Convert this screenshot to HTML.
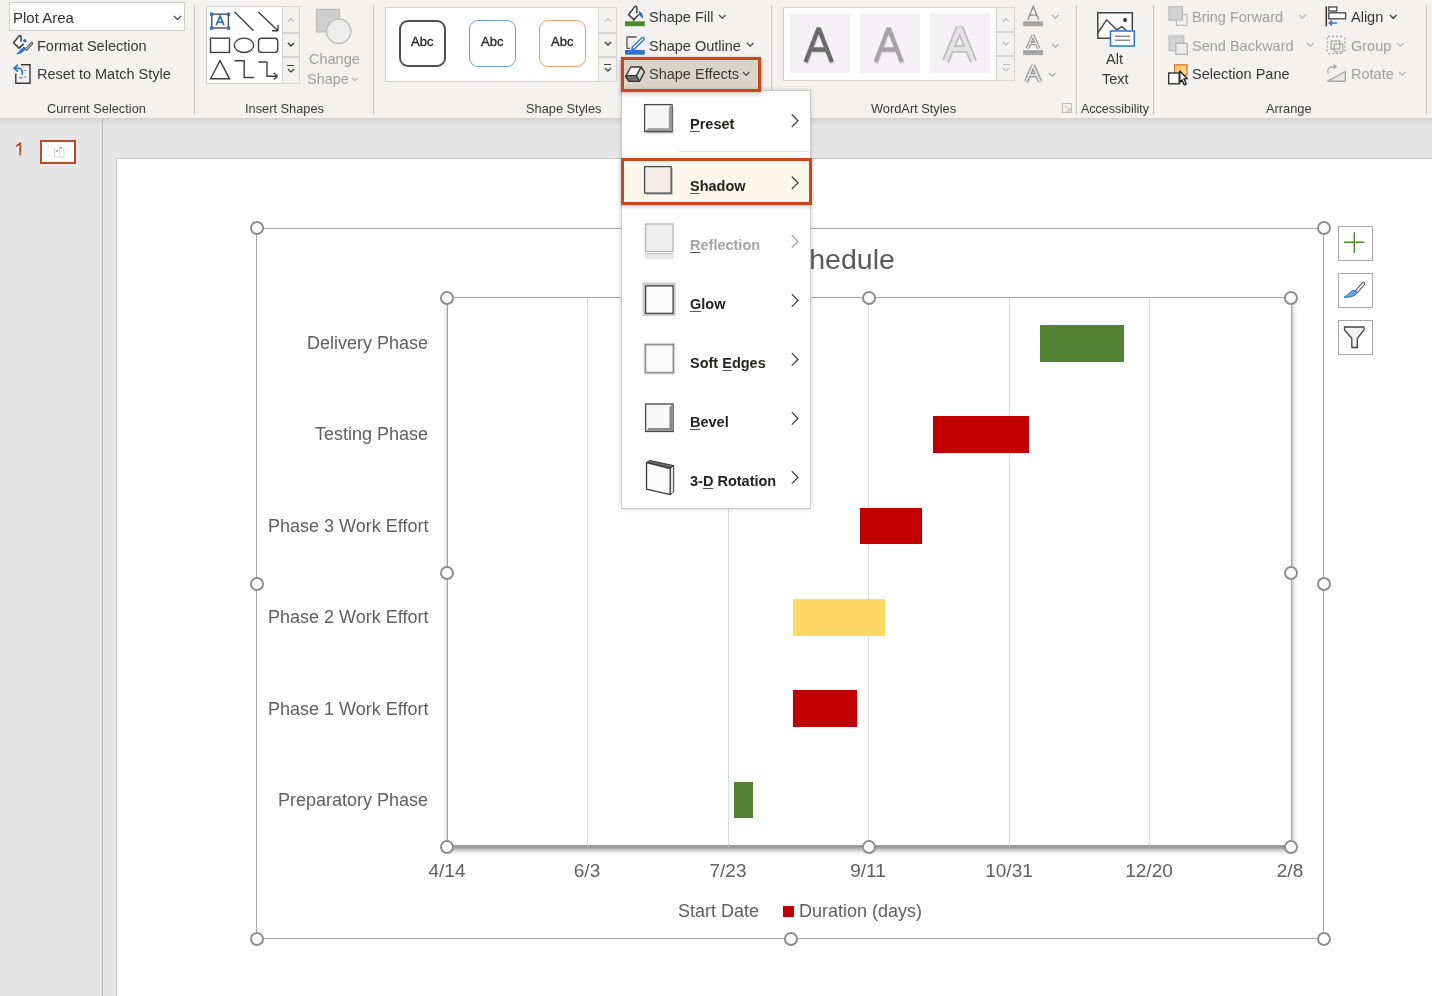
<!DOCTYPE html>
<html><head><meta charset="utf-8">
<style>
*{margin:0;padding:0;box-sizing:border-box}
html,body{width:1432px;height:996px;overflow:hidden}
body{position:relative;background:#e6e6e6;font-family:"Liberation Sans",sans-serif;color:#262626}
.a{position:absolute}
.t,.lbl,.mt{will-change:transform}
.t{position:absolute;white-space:nowrap;font-size:14.6px;line-height:1;color:#323130}
.dis{color:#a19f9d}
.sep{position:absolute;top:5px;width:1px;height:110px;background:#c8c6c4}
.glab{position:absolute;top:101px;font-size:13px;line-height:1;color:#3b3a39;white-space:nowrap}
#ribbon{position:absolute;left:0;top:0;width:1432px;height:118px;background:#f3f2f1}
#rshadow{position:absolute;left:0;top:118px;width:1432px;height:8px;background:linear-gradient(#d2d2d2,#e6e6e6)}
.chev{position:absolute;width:6px;height:6px;border-right:1.3px solid #444;border-bottom:1.3px solid #444;transform:rotate(45deg)}
.sbtn{position:absolute;background:#f3f2f1;border:1px solid #d6d4d2}
/* slide */
#slide{position:absolute;left:116px;top:158px;width:1330px;height:850px;background:#fff;border:1px solid #c9c9c9}
.lbl{position:absolute;white-space:nowrap;font-size:18px;line-height:1;color:#606060}
.handle{position:absolute;width:14px;height:14px;border-radius:50%;border:2px solid #8f8f8f;background:#fff}
.grid{position:absolute;top:298px;width:1px;height:549px;background:#d9d9d9}
.bar{position:absolute}
.ax{font-size:19px;transform:translateX(-50%)}
/* menu */
#menu{position:absolute;left:621px;top:89.5px;width:190px;height:419px;background:#fff;border:1px solid #cdcbc9;box-shadow:0 0 5px rgba(0,0,0,.16)}
.mi{position:absolute;left:0;width:187px;height:47px}
.mt{position:absolute;left:689.5px;font-size:14.5px;font-weight:bold;color:#252423;white-space:nowrap;line-height:1}
.mt u{text-decoration-thickness:1px;text-underline-offset:2px;text-decoration-color:#555}
.mchev{position:absolute;left:167px;width:8px;height:8px;border-right:1.4px solid #444;border-top:1.4px solid #444;transform:rotate(45deg)}
</style></head>
<body>
<div id="ribbon">
<div class="a" style="left:9px;top:2px;width:176px;height:28.5px;background:#fff;border:1px solid #cfcdcb"></div>
<div class="t" style="left:12.5px;top:9.60px;font-size:15px;color:#333;">Plot Area</div>
<svg class="a" style="left:173px;top:15px" width="9" height="6.5"><path d="M1 1 L4.5 4.5 L8 1" fill="none" stroke="#444" stroke-width="1.2"/></svg>
<svg class="a" style="left:10px;top:32px" width="26" height="56" viewBox="10 32 26 56">
 <path d="M21 41.7 L21 36.8 Q20.4 34.6 18.9 36.2 L13.5 42.7 L19.1 48.1 L23.6 43.7" fill="#fff" stroke="#3a3a3a" stroke-width="1.5" stroke-linejoin="round"/>
 <circle cx="24.8" cy="40.8" r="1.7" fill="#2b6fc0"/>
 <path d="M25.5 48.6 L31.6 42.4 Q33 42.5 32.5 44 L26.6 50.3 Z" fill="#e8e8e8" stroke="#555" stroke-width="1.1"/>
 <path d="M17 53.8 Q20.5 53.5 23 51.5 L25.8 48.8 L24 47.2 L21.5 49 Q19.5 51 17 53.8 Z" fill="#2b74c7" stroke="#2b74c7" stroke-width="1"/>
</svg>
<div class="t" style="left:37.4px;top:39.13px;font-size:14.5px;color:#383838;">Format Selection</div>
<svg class="a" style="left:10px;top:62px" width="24" height="25" viewBox="10 62 24 25">
 <path d="M21 64.8 L30 64.8 L30 83.3 L15.8 83.3 L15.8 73.5" fill="none" stroke="#3a3a3a" stroke-width="1.4"/>
 <path d="M14 68.3 L17.5 65.2 M14 68.3 L17.5 71.2 M14.3 68.3 L19 68.3 Q22.3 68.6 22.3 72.8 L22.3 74.5" fill="none" stroke="#2b74c7" stroke-width="1.6" stroke-linecap="round" stroke-linejoin="round"/>
 <path d="M24.5 70.5 L26.5 70.5 M24.5 77 L26.5 77 M19 77.8 L22.5 77.8" stroke="#666" stroke-width="1"/>
</svg>
<div class="t" style="left:37.4px;top:67.33px;font-size:14.5px;color:#383838;">Reset to Match Style</div>
<div class="sep" style="left:194px"></div>
<div class="t" style="left:47px;top:102.76px;font-size:12.8px;color:#3b3a39;">Current Selection</div>
<div class="a" style="left:206px;top:6px;width:94px;height:78px;border:1px solid #d2d0ce;background:#fff"></div>
<div class="sbtn" style="left:281.5px;top:6px;width:18.5px;height:26.5px"></div>
<div class="sbtn" style="left:281.5px;top:32.5px;width:18.5px;height:24.5px"></div>
<div class="sbtn" style="left:281.5px;top:57px;width:18.5px;height:27px"></div>
<svg class="a" style="left:200px;top:5px" width="102" height="82" viewBox="200 5 102 82" fill="none" stroke="#404040" stroke-width="1.4">
 <rect x="211.8" y="14.2" width="16.6" height="13.8" stroke="#505050"/>
 <g fill="#2b74c7" stroke="none"><rect x="210" y="12.5" width="3.3" height="3.3"/><rect x="226.9" y="12.5" width="3.3" height="3.3"/><rect x="210" y="26.5" width="3.3" height="3.3"/><rect x="226.9" y="26.5" width="3.3" height="3.3"/></g>
 <path d="M216.3 25.2 L220.1 16 L223.9 25.2 M217.6 22.2 L222.6 22.2" stroke="#2b74c7" stroke-width="1.8"/>
 <path d="M234.7 11.9 L253.5 30.7"/>
 <path d="M258.4 11.9 L278 30.7 M278 30.7 L278 24.8 M278 30.7 L272 30.7"/>
 <rect x="210.5" y="38.2" width="19" height="14.2"/>
 <ellipse cx="244" cy="45.3" rx="9.7" ry="7.2"/>
 <rect x="258.5" y="38.2" width="19.2" height="14.2" rx="3.2"/>
 <path d="M210.6 78.8 L220 60.6 L229.6 78.8 Z"/>
 <path d="M234.5 60.8 L244.2 60.8 L244.2 77.5 L254 77.5"/>
 <path d="M258.4 62 L267 62 L267 76.3 L277.5 76.3 M277.5 76.3 L273.8 73 M277.5 76.3 L273.8 79.5"/>
</svg>
<svg class="a" style="left:286.5px;top:17px" width="8" height="6.0"><path d="M1 4.5 L4.0 1.5 L7 4.5" fill="none" stroke="#bdbdbd" stroke-width="1.1"/></svg>
<svg class="a" style="left:286.5px;top:42px" width="8" height="6.0"><path d="M1 1 L4.0 4.0 L7 1" fill="none" stroke="#333" stroke-width="1.3"/></svg>
<div class="a" style="left:287px;top:64.5px;width:7px;height:1.3px;background:#444"></div>
<svg class="a" style="left:286.5px;top:67.5px" width="8" height="6.0"><path d="M1 1 L4.0 4.0 L7 1" fill="none" stroke="#444" stroke-width="1.3"/></svg>
<svg class="a" style="left:314px;top:7px" width="40" height="40" viewBox="314 7 40 40">
 <rect x="316.5" y="9.5" width="23" height="22.5" fill="#cfcfcf" stroke="#bdbdbd" stroke-width="1.3"/>
 <circle cx="338.7" cy="31.3" r="12.2" fill="#ececec" stroke="#bdbdbd" stroke-width="1.4"/>
</svg>
<div class="t" style="left:309.3px;top:51.73px;font-size:14.5px;color:#a19f9d;">Change</div>
<div class="t" style="left:306.5px;top:71.73px;font-size:14.5px;color:#a19f9d;">Shape</div>
<svg class="a" style="left:350.5px;top:76.5px" width="7.5" height="5.75"><path d="M1 1 L3.75 3.75 L6.5 1" fill="none" stroke="#b0b0b0" stroke-width="1.1"/></svg>
<div class="sep" style="left:373px"></div>
<div class="t" style="left:245px;top:102.76px;font-size:12.8px;color:#3b3a39;">Insert Shapes</div>
<div class="a" style="left:385px;top:6.5px;width:232px;height:75px;border:1px solid #d2d0ce;background:#fff"></div>
<div class="sbtn" style="left:598px;top:6.5px;width:19px;height:26px"></div>
<div class="sbtn" style="left:598px;top:32.5px;width:19px;height:24px"></div>
<div class="sbtn" style="left:598px;top:56.5px;width:19px;height:25px"></div>
<div class="a" style="left:398.5px;top:20px;width:47px;height:47px;border:2px solid #505050;border-radius:9px"></div>
<div class="a" style="left:468.5px;top:20px;width:47px;height:47px;border:1.7px solid #6fa0db;border-radius:9px"></div>
<div class="a" style="left:538.5px;top:20px;width:47px;height:47px;border:1.7px solid #efa070;border-radius:9px"></div>
<div class="t" style="left:411px;top:35.00px;font-size:13px;color:#2a2a2a;-webkit-text-stroke:.35px #2a2a2a">Abc</div>
<div class="t" style="left:481px;top:35.00px;font-size:13px;color:#2a2a2a;-webkit-text-stroke:.35px #2a2a2a">Abc</div>
<div class="t" style="left:551px;top:35.00px;font-size:13px;color:#2a2a2a;-webkit-text-stroke:.35px #2a2a2a">Abc</div>
<svg class="a" style="left:603.5px;top:17px" width="8" height="6.0"><path d="M1 4.5 L4.0 1.5 L7 4.5" fill="none" stroke="#bdbdbd" stroke-width="1.1"/></svg>
<svg class="a" style="left:603.5px;top:41px" width="8" height="6.0"><path d="M1 1 L4.0 4.0 L7 1" fill="none" stroke="#333" stroke-width="1.3"/></svg>
<div class="a" style="left:604px;top:63.5px;width:7px;height:1.3px;background:#444"></div>
<svg class="a" style="left:603.5px;top:66.5px" width="8" height="6.0"><path d="M1 1 L4.0 4.0 L7 1" fill="none" stroke="#444" stroke-width="1.3"/></svg>
<div class="a" style="left:621px;top:56.8px;width:140px;height:35px;background:#d9d4c8;box-shadow:0 2px 4px rgba(0,0,0,.2)"></div>
<svg class="a" style="left:622px;top:4px" width="26" height="84" viewBox="622 4 26 84">
 <path d="M636.9 13.2 L636.9 7.6 Q636.2 5.4 634.6 6.9 L628.6 14.7 L633.8 19.6 L639.6 13.8" fill="#fff" stroke="#3f3f3f" stroke-width="1.5" stroke-linejoin="round"/>
 <path d="M633.8 19.6 L633.8 21.5" stroke="#555" stroke-width="1.2"/>
 <path d="M639.3 11.5 Q642.6 12.8 642.6 18 Q641 17 639.5 13.5 Z" fill="#2f6db8" stroke="#2f6db8" stroke-width="1"/>
 <rect x="625" y="21.3" width="19.8" height="4.9" fill="#4f8a2e"/>
 <path d="M636.5 37 L627 37 L627 48.3 L630 48.3" fill="none" stroke="#555" stroke-width="1.3"/>
 <path d="M643.5 37.6 Q644.8 38.8 643.6 40 L634 49.2 L631.8 49.6 L632.2 47.3 L641.6 38 Q642.5 37 643.5 37.6 Z" fill="#fff" stroke="#2b74c7" stroke-width="1.4" stroke-linejoin="round"/>
 <rect x="625" y="50" width="19.8" height="4.7" fill="#2b74c7"/>
 <path d="M626.5 75.6 L636.4 75.6 L639.7 81.3 L628.9 81.4 L625.6 76.6 Z" fill="#6e6e6e"/>
 <path d="M636.4 75.6 L641.1 67 L644.4 71.9 L639.7 81.3 Z" fill="#d6d6d6"/>
 <path d="M630.8 67 L641.1 67 L636.4 75.6 L626.5 75.6 Z" fill="#fbfbfb"/>
 <path d="M630.8 67 L641.1 67 L644.4 71.9 L639.7 81.3 L628.9 81.4 L625.6 76.6 Z M626.5 75.6 L636.4 75.6 L641.1 67 M636.4 75.6 L639.7 81.3" fill="none" stroke="#353535" stroke-width="1.4" stroke-linejoin="round"/>
</svg>
<div class="t" style="left:649.4px;top:10.03px;font-size:14.5px;color:#383838;">Shape Fill</div>
<svg class="a" style="left:717.5px;top:13.5px" width="8.5" height="6.25"><path d="M1 1 L4.25 4.25 L7.5 1" fill="none" stroke="#444" stroke-width="1.2"/></svg>
<div class="t" style="left:649.4px;top:38.73px;font-size:14.5px;color:#383838;">Shape Outline</div>
<svg class="a" style="left:746px;top:42px" width="8.5" height="6.25"><path d="M1 1 L4.25 4.25 L7.5 1" fill="none" stroke="#444" stroke-width="1.2"/></svg>
<div class="t" style="left:649.4px;top:67.33px;font-size:14.5px;color:#3b3a39;">Shape Effects</div>
<svg class="a" style="left:741.5px;top:70.5px" width="8.5" height="6.25"><path d="M1 1 L4.25 4.25 L7.5 1" fill="none" stroke="#444" stroke-width="1.2"/></svg>
<div class="sep" style="left:771px"></div>
<div class="t" style="left:526px;top:102.76px;font-size:12.8px;color:#3b3a39;">Shape Styles</div>
<div class="a" style="left:783px;top:6.5px;width:232px;height:74px;border:1px solid #d2d0ce;background:#fff"></div>
<div class="sbtn" style="left:996px;top:6.5px;width:19px;height:25.5px"></div>
<div class="sbtn" style="left:996px;top:32px;width:19px;height:24px"></div>
<div class="sbtn" style="left:996px;top:56px;width:19px;height:24.5px"></div>
<div class="a" style="left:790px;top:13.5px;width:60px;height:59px;background:#f5f2f5"></div>
<div class="a" style="left:860px;top:13.5px;width:60px;height:59px;background:#f5f2f5"></div>
<div class="a" style="left:930px;top:13.5px;width:60px;height:59px;background:#f5f2f5"></div>
<svg class="a" style="left:790px;top:13px" width="200" height="60" viewBox="790 13 200 60">
 <path d="M805.5 63 L818.6 28 L832 63 M810.5 50.2 L827 50.2" fill="none" stroke="#d6d3d6" stroke-width="4.4" stroke-linejoin="bevel" transform="translate(.8 .8)"/>
 <path d="M805.5 62 L818.6 28 L831.8 62 M810.5 49.5 L826.8 49.5" fill="none" stroke="#6b6b6b" stroke-width="4.3" stroke-linejoin="bevel"/>
 <path d="M875.5 63 L888.6 28 L902 63 M880.5 50.2 L897 50.2" fill="none" stroke="#dedade" stroke-width="4.4" stroke-linejoin="bevel" transform="translate(.8 .8)"/>
 <path d="M875.5 62 L888.6 28 L901.8 62 M880.5 49.5 L896.8 49.5" fill="none" stroke="#a4a4a4" stroke-width="4.3" stroke-linejoin="bevel"/>
 <path d="M945.5 61.5 L959.5 27.5 L973.5 61.5 M951 49 L968 49" fill="none" stroke="#bebebe" stroke-width="7.5" stroke-linejoin="bevel"/>
 <path d="M945.5 61.5 L959.5 27.5 L973.5 61.5 M951 49 L968 49" fill="none" stroke="#e4e4e4" stroke-width="4" stroke-linejoin="bevel"/>
</svg>
<svg class="a" style="left:1002px;top:16.5px" width="8" height="6.0"><path d="M1 4.5 L4.0 1.5 L7 4.5" fill="none" stroke="#bdbdbd" stroke-width="1.1"/></svg>
<svg class="a" style="left:1002px;top:41px" width="8" height="6.0"><path d="M1 1 L4.0 4.0 L7 1" fill="none" stroke="#bdbdbd" stroke-width="1.1"/></svg>
<div class="a" style="left:1002.5px;top:63.5px;width:7px;height:1.2px;background:#bdbdbd"></div>
<svg class="a" style="left:1002px;top:66.5px" width="8" height="6.0"><path d="M1 1 L4.0 4.0 L7 1" fill="none" stroke="#bdbdbd" stroke-width="1.1"/></svg>
<svg class="a" style="left:1020px;top:4px" width="26" height="82" viewBox="1020 4 26 82" fill="none">
 <path d="M1027.8 19.8 L1033.3 6.5 L1038.8 19.8 M1029.8 15.2 L1036.8 15.2" stroke="#8c8c8c" stroke-width="1.3"/>
 <rect x="1023.1" y="21.3" width="19.9" height="5" fill="#a6a6a6"/>
 <path d="M1027.3 48.5 L1033 35.5 L1038.7 48.5 M1029.5 43.5 L1036.5 43.5" stroke="#9a9a9a" stroke-width="3.4" stroke-linejoin="bevel"/>
 <path d="M1027.3 48.5 L1033 35.5 L1038.7 48.5 M1029.5 43.5 L1036.5 43.5" stroke="#f3f2f1" stroke-width="1.1" stroke-linejoin="bevel"/>
 <rect x="1023.1" y="50.1" width="19.9" height="5" fill="#a6a6a6"/>
 <path d="M1026 81.5 L1033 65.5 L1040 81.5 M1029 75 L1037 75" stroke="#cfcfcf" stroke-width="4.6" stroke-linejoin="bevel" transform="translate(.6 .8)"/>
 <path d="M1026 81.5 L1033 65.5 L1040 81.5 M1029 75 L1037 75" stroke="#9c9c9c" stroke-width="4.2" stroke-linejoin="bevel"/>
 <path d="M1026 81.5 L1033 65.5 L1040 81.5 M1029 75 L1037 75" stroke="#f0f0f0" stroke-width="1.6" stroke-linejoin="bevel"/>
</svg>
<svg class="a" style="left:1051px;top:14px" width="8.5" height="6.25"><path d="M1 1 L4.25 4.25 L7.5 1" fill="none" stroke="#a6a6a6" stroke-width="1.1"/></svg>
<svg class="a" style="left:1051px;top:43px" width="8.5" height="6.25"><path d="M1 1 L4.25 4.25 L7.5 1" fill="none" stroke="#a6a6a6" stroke-width="1.1"/></svg>
<svg class="a" style="left:1048px;top:71.5px" width="8.5" height="6.25"><path d="M1 1 L4.25 4.25 L7.5 1" fill="none" stroke="#a6a6a6" stroke-width="1.1"/></svg>
<div class="t" style="left:871px;top:102.76px;font-size:12.8px;color:#3b3a39;">WordArt Styles</div>
<svg class="a" style="left:1061px;top:102px" width="12" height="12" viewBox="1061 102 12 12" fill="none" stroke="#bdbdbd" stroke-width="1">
 <path d="M1062.5 112.5 L1062.5 103.5 L1071.5 103.5 M1071.5 103.5 L1071.5 112.5 L1062.5 112.5"/>
 <path d="M1065 106 L1070 111 M1070 107.5 L1070 111 L1066.5 111"/>
</svg>
<div class="sep" style="left:1076px"></div>
<svg class="a" style="left:1094px;top:9px" width="44" height="40" viewBox="1094 9 44 40">
 <path d="M1118.5 38.3 L1097.8 38.3 L1097.8 12.8 L1132.3 12.8 L1132.3 30" fill="#fafafa" stroke="#444" stroke-width="1.5"/>
 <path d="M1097.8 33 L1106.6 19.8 L1117 29.9 L1121.8 26.5 L1126.6 30.8" fill="none" stroke="#444" stroke-width="1.4" stroke-linejoin="round"/>
 <circle cx="1125" cy="20" r="1.9" fill="#333"/>
 <rect x="1110.5" y="31" width="23.8" height="15" fill="#fff" stroke="#2b74c7" stroke-width="1.5"/>
 <path d="M1115 36.2 L1130 36.2 M1115 40.3 L1130 40.3" stroke="#8c8c8c" stroke-width="1.5"/>
</svg>
<div class="t" style="color:#444;left:1105.5px;top:51.93px;font-size:14.5px;color:#383838;">Alt</div>
<div class="t" style="left:1102px;top:72.03px;font-size:14.5px;color:#383838;">Text</div>
<div class="sep" style="left:1153px"></div>
<div class="t" style="left:1080.5px;top:103.02px;font-size:12.5px;color:#3b3a39;">Accessibility</div>
<svg class="a" style="left:1165px;top:4px" width="24" height="84" viewBox="1165 4 24 84">
 <path d="M1176.5 20.8 L1176.5 25.3 L1187 25.3 L1187 14.5 L1182.8 14.5" fill="none" stroke="#b9b9b9" stroke-width="1.3"/>
 <rect x="1169" y="6.7" width="13.5" height="13.5" fill="#d2d2d2" stroke="#bcbcbc" stroke-width="1.2"/>
 <rect x="1169" y="36" width="14.8" height="14.8" fill="#d2d2d2" stroke="#bcbcbc" stroke-width="1.2"/>
 <rect x="1175.8" y="43.3" width="11.5" height="11" fill="#ececec" stroke="#b3b3b3" stroke-width="1.3"/>
 <defs><linearGradient id="sg" x1="0" y1="0" x2="1" y2="1"><stop offset="0" stop-color="#f7c45a"/><stop offset="1" stop-color="#fde3a0"/></linearGradient></defs>
 <rect x="1174.6" y="64.8" width="12.4" height="10.4" fill="url(#sg)" stroke="#e67e3a" stroke-width="1.4"/>
 <rect x="1168.7" y="73" width="10.5" height="10.8" fill="#fff" stroke="#333" stroke-width="1.4"/>
 <path d="M1179.8 71 L1187.2 78.6 L1184 79 L1186.3 84 L1184.2 84.8 L1182 80 L1179.8 82.5 Z" fill="#fff" stroke="#222" stroke-width="1.4" stroke-linejoin="round"/>
</svg>
<div class="t" style="left:1192.3px;top:9.73px;font-size:14.5px;color:#a19f9d;">Bring Forward</div>
<svg class="a" style="left:1298px;top:13.5px" width="8.5" height="6.25"><path d="M1 1 L4.25 4.25 L7.5 1" fill="none" stroke="#b0b0b0" stroke-width="1.1"/></svg>
<div class="t" style="left:1192.3px;top:38.53px;font-size:14.5px;color:#a19f9d;">Send Backward</div>
<svg class="a" style="left:1306px;top:42px" width="8.5" height="6.25"><path d="M1 1 L4.25 4.25 L7.5 1" fill="none" stroke="#b0b0b0" stroke-width="1.1"/></svg>
<div class="t" style="left:1192.3px;top:67.43px;font-size:14.5px;color:#383838;">Selection Pane</div>
<svg class="a" style="left:1323px;top:4px" width="26" height="82" viewBox="1323 4 26 82" fill="none">
 <path d="M1326.3 6.3 L1326.3 26.3" stroke="#333" stroke-width="1.5"/>
 <rect x="1328.8" y="7" width="8" height="4" stroke="#444" stroke-width="1.3" fill="#fff"/>
 <rect x="1328.8" y="12.8" width="16.8" height="6" stroke="#444" stroke-width="1.3" fill="#fff"/>
 <path d="M1337 23 L1329.5 23 M1332 20.5 L1329.3 23 L1332 25.5" stroke="#2b74c7" stroke-width="1.5"/>
 <g stroke="#aaa" stroke-width="1.3">
 <path d="M1327.3 37.5 L1327.3 52 M1344.8 37.5 L1344.8 52 M1328 36.5 L1344 36.5 M1328 53.6 L1344 53.6" stroke-dasharray="2 2"/>
 <rect x="1331.2" y="41" width="8.5" height="8"/>
 <rect x="1334.3" y="44" width="8.5" height="8"/>
 </g>
 <path d="M1327.5 81.2 L1345.3 71.6 L1345.3 81.2 Z" stroke="#aaa" stroke-width="1.4" fill="#e8e8e8"/>
 <path d="M1328.5 73.5 Q1326 69.5 1331 67 L1336 66.5 M1333.5 64.5 L1336.3 66.6 L1333.5 69" stroke="#aaa" stroke-width="1.3"/>
</svg>
<div class="t" style="left:1350.5px;top:9.73px;font-size:14.5px;color:#383838;">Align</div>
<svg class="a" style="left:1389px;top:13.5px" width="8.5" height="6.25"><path d="M1 1 L4.25 4.25 L7.5 1" fill="none" stroke="#333" stroke-width="1.3"/></svg>
<div class="t" style="left:1350.5px;top:38.53px;font-size:14.5px;color:#a19f9d;">Group</div>
<svg class="a" style="left:1395.5px;top:42px" width="8.5" height="6.25"><path d="M1 1 L4.25 4.25 L7.5 1" fill="none" stroke="#b0b0b0" stroke-width="1.1"/></svg>
<div class="t" style="left:1350.5px;top:67.43px;font-size:14.5px;color:#a19f9d;">Rotate</div>
<svg class="a" style="left:1398px;top:71px" width="8.5" height="6.25"><path d="M1 1 L4.25 4.25 L7.5 1" fill="none" stroke="#b0b0b0" stroke-width="1.1"/></svg>
<div class="t" style="left:1266.2px;top:103.16px;font-size:12.8px;color:#3b3a39;">Arrange</div>
<div class="sep" style="left:1426px"></div>
</div>
<div id="rshadow"></div>
<!-- left thumbnails -->
<div class="a" style="left:102px;top:118px;width:1px;height:878px;background:#bdbdbd"></div>
<svg class="a" style="left:14px;top:140px" width="10" height="18" viewBox="14 140 10 18"><path d="M20.3 142.5 L20.3 155.2 M20.3 142.8 Q18.8 145 16.2 146.2" fill="none" stroke="#b5502e" stroke-width="1.9"/></svg>
<div class="a" style="left:40px;top:140px;width:36px;height:24px;border:2.8px solid #b24e2a;background:#fff"></div>
<svg class="a" style="left:43px;top:143px" width="30" height="19" viewBox="43 143 30 19" fill="none" stroke="#c8c8c8" stroke-width=".7">
 <path d="M47 147.5 L49.5 147.5 M47 150.5 L48.5 150.5 M47 155.5 L49.5 155.5"/>
 <path d="M54.5 148 L54.5 157 M59.5 147.5 L59.5 157 M54.5 157 L64 157 M64 148 L64 157"/>
 <rect x="56.5" y="150" width="1" height="2" fill="#b06060" stroke="none"/>
 <rect x="60" y="147" width="2" height="1.5" fill="#888" stroke="none"/>
</svg>

<div id="slide"></div>


<!-- chart area -->
<div class="a" style="left:256px;top:228px;width:1068px;height:711px;border:1px solid #a6a6a6"></div>
<div class="lbl" style="right:537.5px;top:244.5px;font-size:28.5px;color:#5a5a5a">Schedule</div>
<!-- plot area -->
<div class="a" style="left:447px;top:298px;width:844px;height:548px;box-shadow:1px 4px 6px -1px rgba(0,0,0,.55);background:#fff"></div>
<div class="grid" style="left:587px"></div>
<div class="grid" style="left:728px"></div>
<div class="grid" style="left:868px"></div>
<div class="grid" style="left:1009px"></div>
<div class="grid" style="left:1149px"></div>
<div class="a" style="left:446.5px;top:297px;width:845.3px;height:549.3px;border:1.6px solid #a2a2a2"></div>
<div class="bar" style="left:1040px;top:325px;width:84px;height:37px;background:#548235"></div>
<div class="bar" style="left:933px;top:416px;width:96px;height:37px;background:#c00000"></div>
<div class="bar" style="left:860px;top:508px;width:62px;height:36px;background:#c00000"></div>
<div class="bar" style="left:793px;top:599px;width:92px;height:37px;background:#ffd966"></div>
<div class="bar" style="left:793px;top:690px;width:64px;height:37px;background:#c00000"></div>
<div class="bar" style="left:734px;top:782px;width:19px;height:36px;background:#548235"></div>
<div class="lbl" style="right:1004px;top:334.06px">Delivery Phase</div>
<div class="lbl" style="right:1004px;top:425.36px">Testing Phase</div>
<div class="lbl" style="right:1004px;top:516.96px">Phase 3 Work Effort</div>
<div class="lbl" style="right:1004px;top:608.36px">Phase 2 Work Effort</div>
<div class="lbl" style="right:1004px;top:699.66px">Phase 1 Work Effort</div>
<div class="lbl" style="right:1004px;top:791.06px">Preparatory Phase</div>
<div class="lbl ax" style="left:447px;top:861.2px">4/14</div>
<div class="lbl ax" style="left:587px;top:861.2px">6/3</div>
<div class="lbl ax" style="left:728px;top:861.2px">7/23</div>
<div class="lbl ax" style="left:868px;top:861.2px">9/11</div>
<div class="lbl ax" style="left:1009px;top:861.2px">10/31</div>
<div class="lbl ax" style="left:1149px;top:861.2px">12/20</div>
<div class="lbl ax" style="left:1290px;top:861.2px">2/8</div>
<div class="lbl" style="left:678px;top:902.4px;font-size:18px">Start Date</div>
<div class="a" style="left:783px;top:906px;width:11px;height:11px;background:#c00000"></div>
<div class="lbl" style="left:799px;top:902.4px;font-size:18px">Duration (days)</div>
<!-- handles -->
<div class="handle" style="left:250px;top:221px"></div>
<div class="handle" style="left:1317px;top:221px"></div>
<div class="handle" style="left:250px;top:576.5px"></div>
<div class="handle" style="left:1317px;top:576.5px"></div>
<div class="handle" style="left:250px;top:932px"></div>
<div class="handle" style="left:783.5px;top:932px"></div>
<div class="handle" style="left:1317px;top:932px"></div>
<div class="handle" style="left:440px;top:291px"></div>
<div class="handle" style="left:862px;top:291px"></div>
<div class="handle" style="left:1284px;top:291px"></div>
<div class="handle" style="left:440px;top:565.5px"></div>
<div class="handle" style="left:1284px;top:565.5px"></div>
<div class="handle" style="left:440px;top:840px"></div>
<div class="handle" style="left:862px;top:840px"></div>
<div class="handle" style="left:1284px;top:840px"></div>
<!-- side buttons -->
<div class="a" style="left:1338px;top:226px;width:35px;height:35px;border:1px solid #a9a9a9;background:#fff"></div>
<div class="a" style="left:1338px;top:273px;width:35px;height:35px;border:1px solid #a9a9a9;background:#fff"></div>
<div class="a" style="left:1338px;top:320px;width:35px;height:35px;border:1px solid #a9a9a9;background:#fff"></div>
<svg class="a" style="left:1338px;top:226px" width="35" height="130" viewBox="1338 226 35 130" fill="none">
 <path d="M1344 242.3 L1364.5 242.3 M1354.3 232.3 L1354.3 253" stroke="#4f8a2e" stroke-width="1.4"/>
 <path d="M1363.9 282.3 Q1365.2 283 1364.4 284.5 L1357.5 292.6 L1355.3 291 L1362.2 282.8 Q1363 282 1363.9 282.3 Z" fill="#fff" stroke="#555" stroke-width="1.1"/>
 <path d="M1344 297.3 Q1348 297.5 1352 296.5 Q1355.5 295.5 1357.3 292.8 L1355.3 290.8 Q1352 289.5 1349.8 292.5 Q1348.2 295.2 1344 297.3 Z" fill="#6aa7e3" stroke="#2b74c7" stroke-width="1"/>
 <path d="M1344.5 327 L1364 327 L1364 330 L1357.3 338.3 L1357.3 347.5 L1351.8 347.5 L1351.8 338.3 L1344.5 330 Z" fill="#f2f2f2" stroke="#444" stroke-width="1.3" stroke-linejoin="round"/>
</svg>
<div id="menu"></div>
<!-- menu content -->
<div class="a" style="left:621px;top:56.8px;width:140px;height:35px;border:3px solid #c9471f;box-shadow:0 0 1.2px rgba(230,90,40,.5),0 3px 4px rgba(0,0,0,.16)"></div>

<div class="a" style="left:679px;top:151px;width:130px;height:1px;background:#e1dfdd"></div>
<div class="a" style="left:621px;top:157.5px;width:191px;height:47.5px;border:3px solid #c9461f;background:#fdf6ea;box-shadow:0 2px 4px rgba(0,0,0,.18)"></div>
<svg class="a" style="left:640px;top:100px" width="40" height="400" viewBox="640 100 40 400">
 <!-- preset -->
 <rect x="646" y="106.5" width="27.5" height="27" fill="#c8c8c8"/>
 <rect x="644.6" y="104.6" width="27.5" height="27" fill="#f7f7f7" stroke="#4a4a4a" stroke-width="1.3"/>
 <path d="M668.8 107.5 L671.4 105.3 L671.4 131 L645.3 131 L648 128.3 L668.8 128.3 Z" fill="#9a9a9a"/>
 <!-- shadow -->
 <rect x="646" y="167.5" width="27" height="27.5" fill="#b5b0a6" opacity=".8"/>
 <rect x="644.6" y="166.6" width="26.5" height="26.5" fill="#f4efe6" stroke="#4a4a4a" stroke-width="1.3"/>
 <!-- reflection -->
 <rect x="645.5" y="224" width="27.5" height="27.5" fill="#efefef" stroke="#b4b4b4" stroke-width="1.3"/>
 <rect x="645" y="253" width="28.5" height="6" fill="#e6e6e6"/>
 <rect x="645" y="253" width="28.5" height="1.5" fill="#cfcfcf"/>
 <!-- glow -->
 <rect x="642.5" y="282.6" width="33.3" height="33.5" fill="#cdcdcd" rx="1"/>
 <rect x="645.6" y="285.9" width="27.5" height="27.5" fill="#fafafa" stroke="#4d4d4d" stroke-width="1.4"/>
 <!-- soft edges -->
 <rect x="643.5" y="342.5" width="32" height="32.5" fill="#ececec" rx="2"/>
 <rect x="645.4" y="344.6" width="28" height="28" fill="#fafafa" stroke="#8f8f8f" stroke-width="1.7"/>
 <!-- bevel -->
 <rect x="645.6" y="404" width="27.5" height="27.5" fill="#f8f8f8" stroke="#484848" stroke-width="1.3"/>
 <path d="M669.5 406.5 L672.3 405 L672.3 430.8 L646.5 430.8 L648.5 428 L669.5 428 Z" fill="#8a8a8a"/>
 <!-- 3d rotation -->
 <path d="M646.5 462.5 L650 460.5 L673.7 465.6 L670.2 468.5 Z" fill="#6a6a6a" stroke="#3a3a3a" stroke-width="1" stroke-linejoin="round"/>
 <path d="M670.2 468.5 L673.7 465.6 L673.7 491.8 L670.2 494.6 Z" fill="#e8e8e8" stroke="#3a3a3a" stroke-width="1" stroke-linejoin="round"/>
 <path d="M646.5 462.5 L670.2 468.5 L670.2 494.6 L646.5 489.2 Z" fill="#fafafa" stroke="#3a3a3a" stroke-width="1.3" stroke-linejoin="round"/>
</svg>
<div class="mt" style="top:117.3px"><u>P</u>reset</div>
<div class="mt" style="top:179.3px"><u>S</u>hadow</div>
<div class="mt" style="top:238.3px;color:#a6a6a6"><u>R</u>eflection</div>
<div class="mt" style="top:297.3px"><u>G</u>low</div>
<div class="mt" style="top:356.3px">Soft <u>E</u>dges</div>
<div class="mt" style="top:415.3px"><u>B</u>evel</div>
<div class="mt" style="top:474.3px">3-<u>D</u> Rotation</div>
<svg class="a" style="left:788px;top:110px" width="14" height="380" viewBox="788 110 14 380" fill="none" stroke="#3c3c3c" stroke-width="1.2">
 <path d="M791.8 114.5 L798 120.8 L791.8 127"/>
 <path d="M791.8 176.5 L798 182.8 L791.8 189"/>
 <path d="M791.8 235.2 L798 241.5 L791.8 247.7" stroke="#a0a0a0"/>
 <path d="M791.8 294.2 L798 300.5 L791.8 306.7"/>
 <path d="M791.8 353.2 L798 359.5 L791.8 365.7"/>
 <path d="M791.8 412.2 L798 418.5 L791.8 424.7"/>
 <path d="M791.8 471.2 L798 477.5 L791.8 483.7"/>
</svg>
</body></html>
